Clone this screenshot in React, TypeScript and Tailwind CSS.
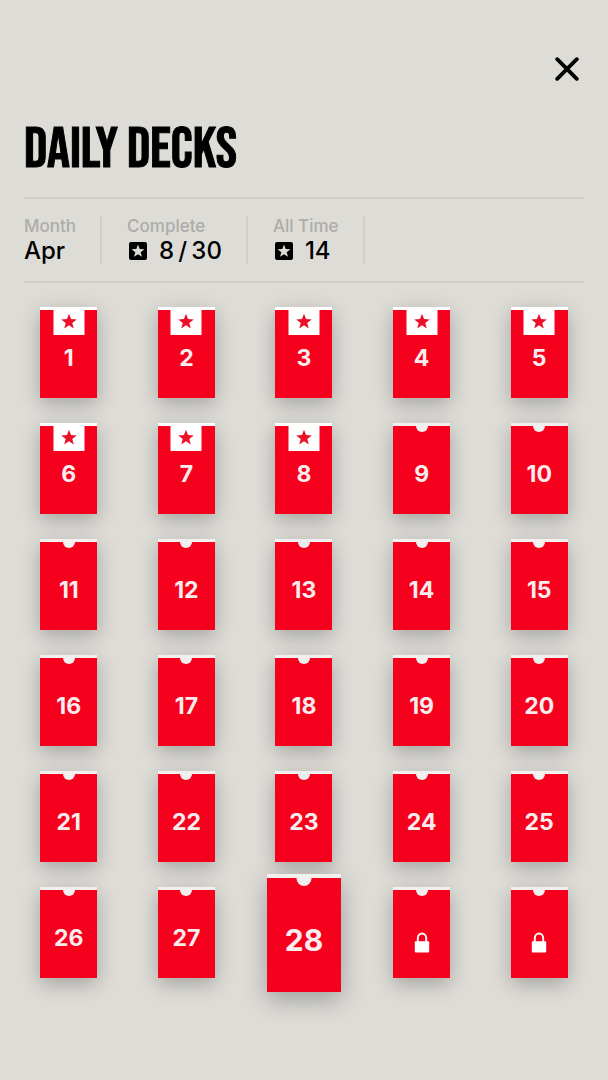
interface DeckProps {
  day: number
  state: 'complete' | 'open' | 'today' | 'locked'
}

interface StatProps {
  label: string
  value: string
  starred?: boolean
}

const DAYS_IN_MONTH = 30
const COMPLETED = 8
const TODAY = 28

const STAR_POINTS =
  '12,1 14.9,8.6 23,9 16.6,14 18.8,22 12,17.4 5.2,22 7.4,14 1,9 9.1,8.6'

function Star({ className }: { className: string }) {
  return (
    <svg viewBox="0 0 24 24" className={className} aria-hidden="true">
      <polygon points={STAR_POINTS} fill="currentColor" />
    </svg>
  )
}

function Lock() {
  return (
    <svg viewBox="0 0 16 21" className="mt-2 h-[21px] w-4" aria-hidden="true">
      <path
        d="M3.8 10V6.2a4.2 4.7 0 0 1 8.4 0V10"
        fill="none"
        stroke="currentColor"
        strokeWidth="1.9"
      />
      <rect x="0.8" y="9.3" width="14.4" height="11.2" rx="1" fill="currentColor" />
    </svg>
  )
}

function Stat({ label, value, starred }: StatProps) {
  return (
    <div className="mr-[25px] h-12 border-r-2 border-[#d0cfca] pr-6">
      <dt className="text-[17px] leading-5 font-medium text-[#adaca8]">
        {label}
      </dt>
      <dd className="flex items-center gap-3 text-2xl leading-[30px] font-medium whitespace-nowrap">
        {starred && (
          <span className="ml-0.5 flex size-[18px] items-center justify-center rounded-xs bg-black text-[#dddcd7]">
            <Star className="size-[14px]" />
          </span>
        )}
        {value}
      </dd>
    </div>
  )
}

function Deck({ day, state }: DeckProps) {
  const isToday = state === 'today'
  const isComplete = state === 'complete'
  const isLocked = state === 'locked'

  const size = isToday
    ? 'z-10 h-[118px] w-[74px] border-t-4 pt-3 text-[30px] shadow-[0_8px_24px_rgba(0,0,0,0.28)]'
    : 'h-[91px] w-[57px] border-t-[3px] pt-2 text-[23px] shadow-[0_6px_20px_rgba(0,0,0,0.26)]'

  return (
    <button
      type="button"
      aria-label={isLocked ? `Day ${day}, locked` : undefined}
      className={`relative flex items-center justify-center bg-[#f5001d] font-bold ${size} ${
        isComplete ? 'border-white' : 'border-[#f1f0ee]'
      } ${isLocked ? 'text-white' : 'text-[#fbecee]'}`}
    >
      {isComplete ? (
        <span className="absolute top-0 left-1/2 flex h-[25px] w-[31px] -translate-x-1/2 justify-center bg-white pt-[3px] text-[#ec1029]">
          <Star className="size-[17px]" />
        </span>
      ) : (
        <span
          className={`absolute top-0 left-1/2 -translate-x-1/2 rounded-b-full bg-[#f1f0ee] ${
            isToday ? 'h-2 w-[15px]' : 'h-[6px] w-[12px]'
          }`}
        />
      )}
      {isLocked ? <Lock /> : day}
    </button>
  )
}

function getState(day: number): DeckProps['state'] {
  if (day <= COMPLETED) return 'complete'
  if (day === TODAY) return 'today'
  return day > TODAY ? 'locked' : 'open'
}

export default function App() {
  const days = Array.from({ length: DAYS_IN_MONTH }, (_, i) => i + 1)

  return (
    <main className="min-h-screen bg-[#dddcd7] pt-12 pb-20 font-['Inter','Liberation_Sans',sans-serif] text-black">
      <header className="px-6">
        <div className="flex justify-end">
          <button
            type="button"
            aria-label="Close"
            className="-mr-1 flex size-[42px] items-center justify-center"
          >
            <svg viewBox="0 0 24 24" className="size-6" aria-hidden="true">
              <path
                d="M2.2 2.2l19.6 19.6M21.8 2.2L2.2 21.8"
                stroke="currentColor"
                strokeWidth="3.8"
                strokeLinecap="round"
              />
            </svg>
          </button>
        </div>

        <h1 className="mt-[31px] mb-[17px] text-[57px] leading-[59px] font-normal whitespace-nowrap [-webkit-text-stroke:1px_black] font-['Bebas_Neue','Roboto_Condensed','Liberation_Sans_Narrow','Liberation_Sans',sans-serif]">
          DAILY DECKS
        </h1>

        <dl className="flex border-y-2 border-[#d0cfca] py-[17px]">
          <Stat label="Month" value="Apr" />
          <Stat label="Complete" value={'8\u2009/\u200930'} starred />
          <Stat label="All Time" value="14" starred />
        </dl>
      </header>

      <section
        aria-label="April decks"
        className="mt-6 grid auto-rows-[91px] grid-cols-5 place-items-center gap-y-[25px] px-[10px]"
      >
        {days.map((day) => (
          <Deck key={day} day={day} state={getState(day)} />
        ))}
      </section>
    </main>
  )
}
